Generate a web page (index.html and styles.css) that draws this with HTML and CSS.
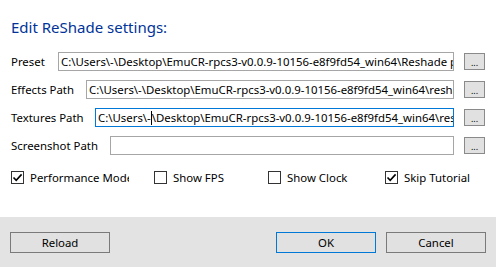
FILE: index.html
```html
<!DOCTYPE html>
<html lang="en">
<head>
    <meta charset="UTF-8">
    <title>Edit ReShade settings</title>
    <link rel="stylesheet" href="styles.css">
</head>
<body>
    <div class="dialog">
        <div class="content">
            <h1 class="title">Edit ReShade settings:</h1>

            <div class="paths">
                <div class="path-row">
                    <label class="lbl lbl-preset">Preset</label>
                    <div class="path-box"><span class="path-text">C:\Users\-\Desktop\EmuCR-rpcs3-v0.0.9-10156-e8f9fd54_win64\Reshade presets\Default.ini</span></div>
                    <button class="browse">...</button>
                </div>
                <div class="path-row">
                    <label class="lbl lbl-effects">Effects Path</label>
                    <div class="path-box"><span class="path-text">C:\Users\-\Desktop\EmuCR-rpcs3-v0.0.9-10156-e8f9fd54_win64\reshade-shaders\Shaders</span></div>
                    <button class="browse">...</button>
                </div>
                <div class="path-row">
                    <label class="lbl lbl-textures">Textures Path</label>
                    <div class="path-box focused"><span class="path-text">C:\Users\-<span class="caret"></span>\Desktop\EmuCR-rpcs3-v0.0.9-10156-e8f9fd54_win64\reshade-shaders\Textures</span></div>
                    <button class="browse">...</button>
                </div>
                <div class="path-row">
                    <label class="lbl lbl-screens">Screenshot Path</label>
                    <div class="path-box"></div>
                    <button class="browse">...</button>
                </div>
            </div>

            <div class="options">
                <div class="option opt-perf">
                    <span class="check"><svg width="11" height="11" viewBox="0 0 11 11"><path d="M1.5 5.5 L4.2 8.3 L9.6 2.4" fill="none" stroke="#000" stroke-width="1.6"/></svg></span>
                    <span class="opt-text">Performance Mode</span>
                </div>
                <div class="option opt-fps">
                    <span class="check"></span>
                    <span class="opt-text">Show FPS</span>
                </div>
                <div class="option opt-clock">
                    <span class="check"></span>
                    <span class="opt-text">Show Clock</span>
                </div>
                <div class="option">
                    <span class="check"><svg width="11" height="11" viewBox="0 0 11 11"><path d="M1.5 5.5 L4.2 8.3 L9.6 2.4" fill="none" stroke="#000" stroke-width="1.6"/></svg></span>
                    <span class="opt-text">Skip Tutorial</span>
                </div>
            </div>
        </div>

        <div class="footer">
            <button class="btn">Reload</button>
            <div class="footer-right">
                <button class="btn btn-default">OK</button>
                <button class="btn">Cancel</button>
            </div>
        </div>
    </div>
</body>
</html>
```

FILE: styles.css
```css
body {
    margin: 0;
    background-color: #ffffff;
    font-family: "Noto Sans", "Open Sans", sans-serif;
    font-size: 11.4px;
    color: #000000;
}
.dialog {
    width: 496px;
    height: 267px;
    display: flex;
    flex-direction: column;
}
.content {
    height: 217px;
    padding: 0 11px;
    box-sizing: border-box;
}
.title {
    margin: 16px 0 0 0;
    font-size: 15px;
    line-height: 22px;
    font-weight: normal;
    color: #003399;
}
.paths {
    margin-top: 14px;
    display: flex;
    flex-direction: column;
    gap: 9px;
}
.path-row {
    display: flex;
    align-items: center;
    height: 19px;
}
.lbl {
    flex: none;
    white-space: nowrap;
}
.lbl-preset { width: 47px; }
.lbl-effects { width: 75px; }
.lbl-textures { width: 84px; }
.lbl-screens { width: 99px; }
.path-box {
    flex: 1;
    min-width: 0;
    height: 19px;
    box-sizing: border-box;
    border: 1px solid #a6a6a6;
    padding: 0 2px;
    line-height: 17px;
    white-space: nowrap;
    overflow: hidden;
}
.path-box.focused {
    border-color: #0078d7;
}
.caret {
    display: inline-block;
    width: 0;
    height: 14px;
    border-left: 1px solid #000;
    vertical-align: -3px;
}
.browse {
    flex: none;
    margin-left: 10px;
    width: 21px;
    height: 17px;
    padding: 0;
    border: 1px solid #8a8a8a;
    background-color: #e1e1e1;
    font-family: inherit;
    font-size: 9px;
    line-height: 17px;
    color: #000;
}
.options {
    margin-top: 16px;
    display: flex;
    align-items: center;
    height: 13px;
}
.option {
    display: flex;
    align-items: center;
    gap: 6px;
    white-space: nowrap;
}
.opt-perf {
    width: 118px;
    overflow: hidden;
    margin-right: 25px;
}
.opt-fps { width: 114px; }
.opt-clock { width: 117px; }
.check {
    flex: none;
    width: 13px;
    height: 13px;
    box-sizing: border-box;
    border: 1px solid #333333;
    background-color: #fff;
    display: flex;
    align-items: center;
    justify-content: center;
}
.opt-text {
    line-height: 15px;
}
.footer {
    flex: 1;
    background-color: #e3e3e3;
    display: flex;
    justify-content: space-between;
    align-items: flex-start;
    padding: 15px 10px 0 10px;
}
.footer-right {
    display: flex;
    gap: 10px;
}
.btn {
    width: 100px;
    height: 21px;
    padding: 0;
    border: 1px solid #7a7a7a;
    background-color: #e1e1e1;
    font-family: inherit;
    font-size: 11.4px;
    color: #000;
}
.btn-default {
    border-color: #0078d7;
}
```
